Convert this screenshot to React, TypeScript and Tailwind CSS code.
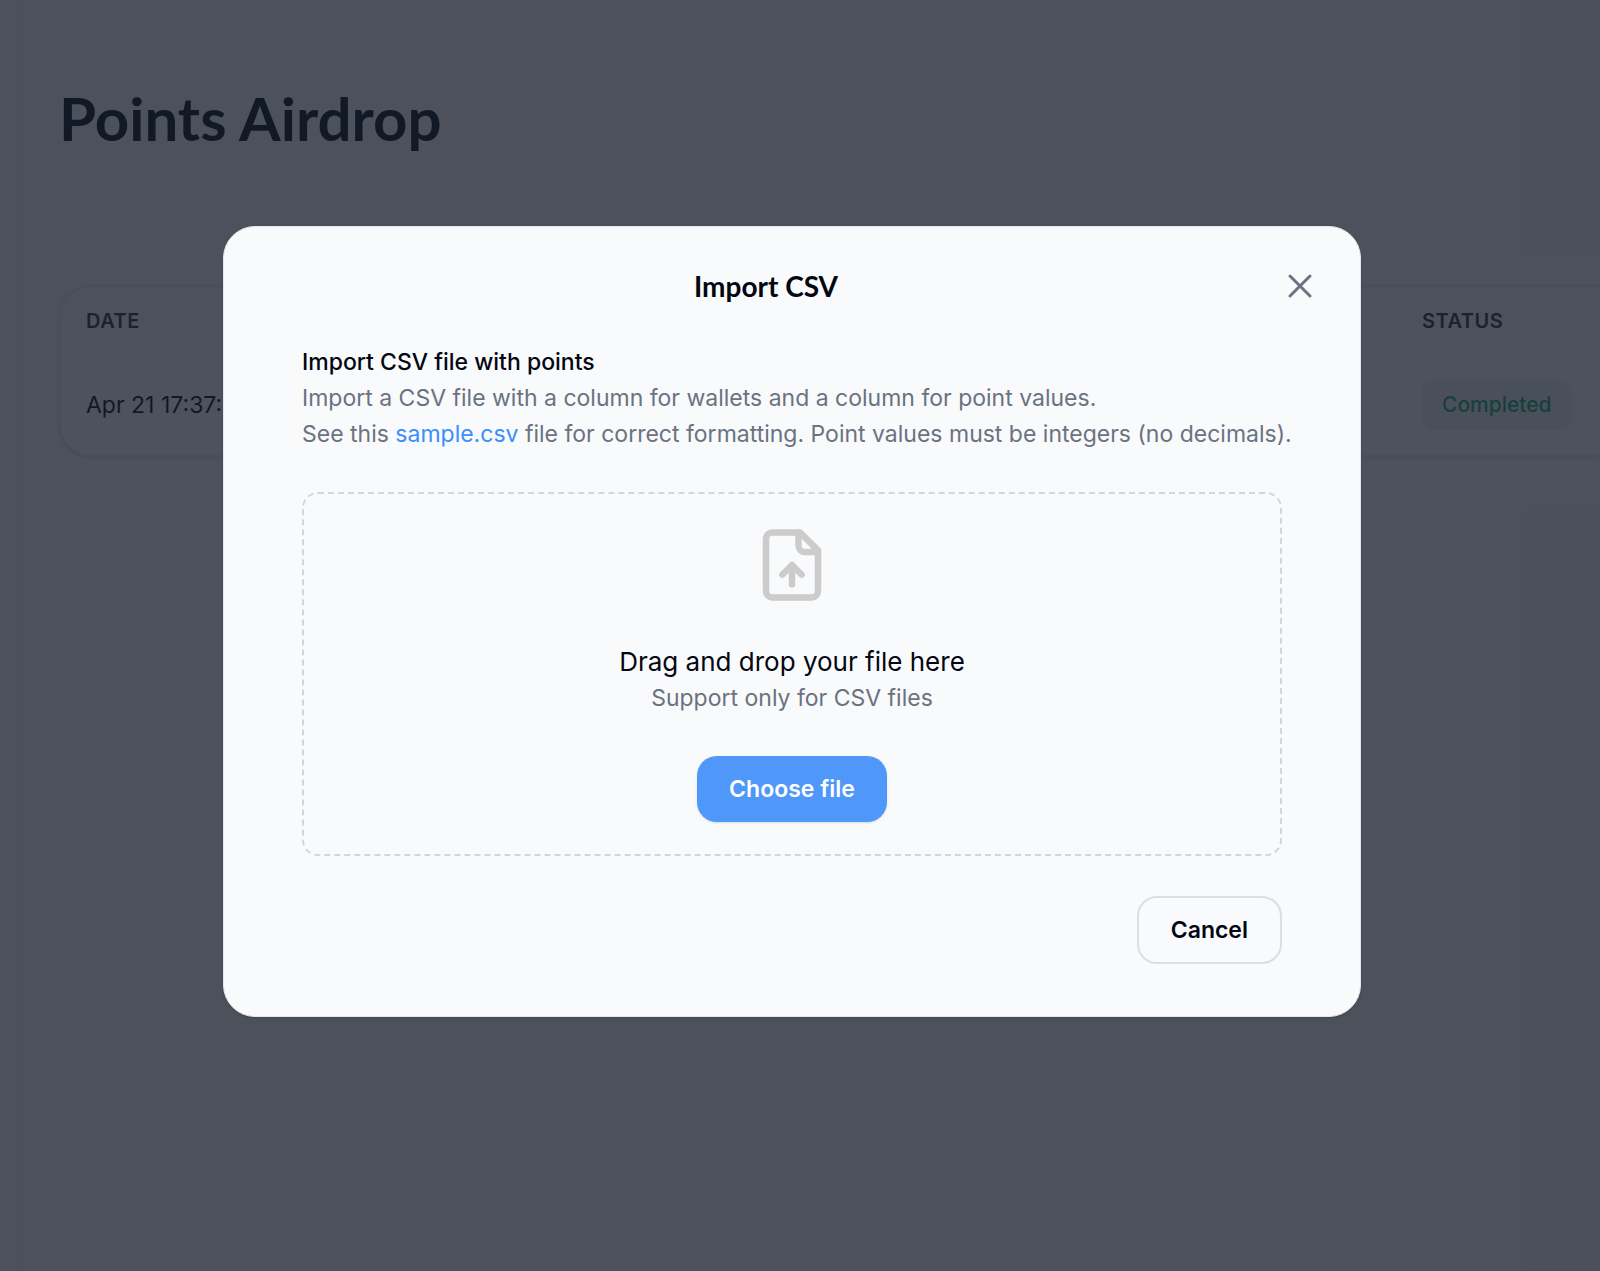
import { useRef } from "react";

interface AirdropRow {
  date: string;
  status: string;
}

const rows: AirdropRow[] = [{ date: "Apr 21 17:37:08", status: "Completed" }];

function CloseIcon() {
  return (
    <svg className="size-10" viewBox="0 0 24 24" fill="none" stroke="currentColor" strokeWidth="1.8" strokeLinecap="round" strokeLinejoin="round" aria-hidden="true">
      <path d="M6 18 18 6M6 6l12 12" />
    </svg>
  );
}

function FileUpIcon() {
  return (
    <svg className="size-[78px] text-[#cccccc]" viewBox="0 0 24 24" fill="none" stroke="currentColor" strokeWidth="2" strokeLinecap="round" strokeLinejoin="round" aria-hidden="true">
      <path d="M14.5 2H6a2 2 0 0 0-2 2v16a2 2 0 0 0 2 2h12a2 2 0 0 0 2-2V7.5L14.5 2z" />
      <path d="M14 2v4a2 2 0 0 0 2 2h4" />
      <path d="M12 12v6" />
      <path d="m15 15-3-3-3 3" />
    </svg>
  );
}

function AirdropTable() {
  return (
    <div className="overflow-hidden rounded-l-[32px] border-2 border-r-0 border-[#eceef1] bg-white shadow-sm">
      <table className="w-full text-left">
        <thead className="bg-[#f9fafb]">
          <tr className="h-[68px] text-[20px] text-[#374151]">
            <th className="pl-[25px] font-semibold tracking-wide">DATE</th>
            <th className="w-[178px] font-semibold tracking-wide">STATUS</th>
          </tr>
        </thead>
        <tbody>
          {rows.map((row) => (
            <tr key={row.date} className="h-[100px]">
              <td className="pl-[25px] text-[23px]">{row.date}</td>
              <td>
                <span className="inline-flex h-[50px] items-center rounded-xl bg-[#eef6f8] px-5 text-[21px] font-medium text-[#2fb56c]">
                  {row.status}
                </span>
              </td>
            </tr>
          ))}
        </tbody>
      </table>
    </div>
  );
}

function ImportModal() {
  const fileInput = useRef<HTMLInputElement>(null);

  return (
    <div
      role="dialog"
      aria-modal="true"
      aria-labelledby="import-title"
      className="w-full max-w-[1138px] rounded-[32px] border border-[#e5e7eb] bg-[#f9fafc] pb-[52px] text-[#030712] shadow-sm"
    >
      <div className="flex h-[117px] items-center pr-10 pl-7">
        <h2 id="import-title" className="flex-1 text-center font-[Lato,sans-serif] text-[28px] font-bold">
          Import CSV
        </h2>
        <button type="button" aria-label="Close" className="text-[#6b7280]">
          <CloseIcon />
        </button>
      </div>

      <div className="px-[78px]">
        <div className="text-[23px] leading-9 text-[#6b7280]">
          <p className="font-medium text-[#030712]">Import CSV file with points</p>
          <p>Import a CSV file with a column for wallets and a column for point values.</p>
          <p className="lg:whitespace-nowrap">
            See this <a href="#sample" className="text-[#3b8efb]">sample.csv</a> file for correct formatting. Point values must be integers (no decimals).
          </p>
        </div>

        <div className="mt-10 flex flex-col items-center rounded-2xl border-2 border-dashed border-[#d4d5d7] py-8 text-center leading-9">
          <FileUpIcon />
          <p className="mt-10 text-[26px]">Drag and drop your file here</p>
          <p className="text-[23px] text-[#6b7280]">Support only for CSV files</p>
          <input ref={fileInput} type="file" accept=".csv" aria-label="CSV file" className="hidden" />
          <button
            type="button"
            onClick={() => fileInput.current?.click()}
            className="mt-10 h-[66px] rounded-[20px] bg-[#4f97f9] px-8 text-[23px] font-semibold text-white shadow-sm"
          >
            Choose file
          </button>
        </div>

        <div className="mt-10 flex justify-end">
          <button type="button" className="h-[68px] rounded-[20px] border-2 border-[#dcdee2] px-8 text-[23px] font-semibold">
            Cancel
          </button>
        </div>
      </div>
    </div>
  );
}

export default function App() {
  return (
    <div className="relative flex min-h-screen overflow-hidden bg-[#f9fafb] font-[Inter,sans-serif] text-[#111827]">
      <aside className="w-[19px] shrink-0 border-r border-[#eceef1]" />
      <main className="min-w-0 flex-1 pt-20 pl-10">
        <h1 className="font-[Lato,sans-serif] text-[60px] leading-[76px] font-bold">Points Airdrop</h1>
        <div className="mt-[129px]">
          <AirdropTable />
        </div>
      </main>

      <div className="absolute inset-0 flex items-center justify-center bg-[#111827]/75 pr-4 pb-7">
        <ImportModal />
      </div>
    </div>
  );
}
